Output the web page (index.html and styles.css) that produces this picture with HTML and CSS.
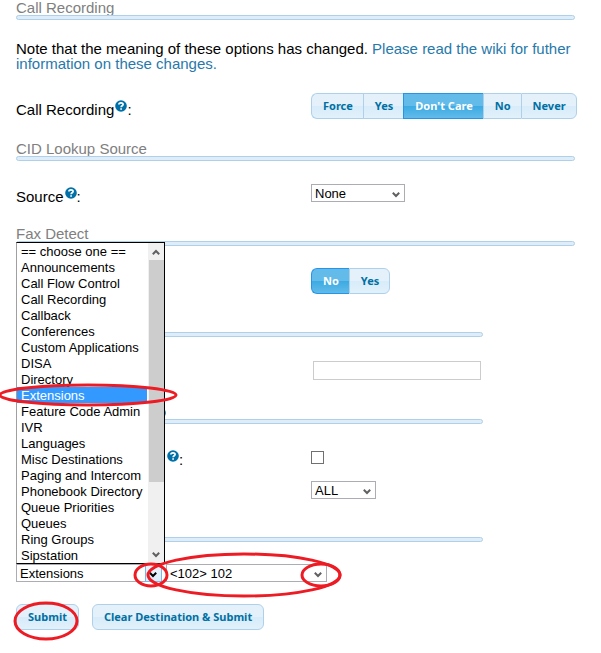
FILE: index.html
```html
<!DOCTYPE html>
<html lang="en">
<head>
<meta charset="utf-8">
<title>Call Recording</title>
<link rel="stylesheet" href="styles.css">
</head>
<body>
<svg class="defs" aria-hidden="true">
  <symbol id="help" viewBox="0 0 12 12">
    <circle cx="6" cy="6" r="5.8" fill="#0071a8"/>
    <path d="M3.9 4.6C3.9 2.4 8.1 2.3 8.1 4.5C8.1 5.8 6.2 5.8 6.1 7.2M6.1 8.2V9.8" fill="none" stroke="#fff" stroke-width="1.7"/>
  </symbol>
  <symbol id="chevron" viewBox="0 0 8 6">
    <path d="M0.8 0.8L4 4L7.2 0.8" fill="none" stroke="currentColor" stroke-width="2"/>
  </symbol>
</svg>
<main class="page">
  <form>
    <section class="section recording">
      <h2 class="title">Call Recording</h2>
      <p class="note">Note that the meaning of these options has changed. <a href="#">Please read the wiki for futher information on these changes.</a></p>
      <div class="row">
        <span class="label" id="rec-label">Call Recording<svg class="help"><use href="#help"/></svg>:</span>
        <div class="buttonset" role="radiogroup" aria-labelledby="rec-label">
          <input type="radio" name="rec" id="rec-force"><label for="rec-force">Force</label>
          <input type="radio" name="rec" id="rec-yes"><label for="rec-yes">Yes</label>
          <input type="radio" name="rec" id="rec-any" checked><label for="rec-any">Don't Care</label>
          <input type="radio" name="rec" id="rec-no"><label for="rec-no">No</label>
          <input type="radio" name="rec" id="rec-never"><label for="rec-never">Never</label>
        </div>
      </div>
    </section>

    <section class="section lookup">
      <h2 class="title">CID Lookup Source</h2>
      <div class="row">
        <label class="label" for="source">Source<svg class="help"><use href="#help"/></svg>:</label>
        <div class="dropdown source">
          <select id="source"><option>None</option></select>
          <svg class="arrow"><use href="#chevron"/></svg>
        </div>
      </div>
    </section>

    <section class="section fax">
      <h2 class="title">Fax Detect</h2>
      <div class="row">
        <span></span>
        <div class="buttonset" role="radiogroup">
          <input type="radio" name="fax" id="fax-no" checked><label for="fax-no">No</label>
          <input type="radio" name="fax" id="fax-yes"><label for="fax-yes">Yes</label>
        </div>
      </div>
    </section>

    <section class="section narrow language">
      <div class="title"></div>
      <div class="row">
        <span></span>
        <input class="textbox" type="text">
      </div>
    </section>

    <section class="section narrow privacy">
      <div class="title"><svg class="help"><use href="#help"/></svg></div>
      <div class="row">
        <label class="label tail" for="enable"><svg class="help"><use href="#help"/></svg>:</label>
        <input class="tick" type="checkbox" id="enable">
      </div>
      <div class="row">
        <span></span>
        <div class="dropdown all">
          <select><option>ALL</option></select>
          <svg class="arrow"><use href="#chevron"/></svg>
        </div>
      </div>
    </section>

    <section class="section narrow destination">
      <div class="title"></div>
      <div class="targets">
        <div class="dropdown open">
          <select><option>Extensions</option></select>
          <span class="opener"><svg class="arrow"><use href="#chevron"/></svg></span>
          <div class="popup">
            <ul class="options" role="listbox">
              <li role="option">== choose one ==</li>
              <li role="option">Announcements</li>
              <li role="option">Call Flow Control</li>
              <li role="option">Call Recording</li>
              <li role="option">Callback</li>
              <li role="option">Conferences</li>
              <li role="option">Custom Applications</li>
              <li role="option">DISA</li>
              <li role="option">Directory</li>
              <li role="option" aria-selected="true">Extensions</li>
              <li role="option">Feature Code Admin</li>
              <li role="option">IVR</li>
              <li role="option">Languages</li>
              <li role="option">Misc Destinations</li>
              <li role="option">Paging and Intercom</li>
              <li role="option">Phonebook Directory</li>
              <li role="option">Queue Priorities</li>
              <li role="option">Queues</li>
              <li role="option">Ring Groups</li>
              <li role="option">Sipstation</li>
            </ul>
            <div class="scrollbar">
              <svg class="step up"><use href="#chevron"/></svg>
              <div class="thumb"></div>
              <svg class="step"><use href="#chevron"/></svg>
            </div>
          </div>
        </div>
        <div class="dropdown extension">
          <select><option>&lt;102&gt; 102</option></select>
          <svg class="arrow"><use href="#chevron"/></svg>
        </div>
      </div>
    </section>

    <div class="actions">
      <button type="submit">Submit</button>
      <button type="button">Clear Destination &amp; Submit</button>
    </div>
  </form>
  <svg class="marks" width="601" height="653" viewBox="0 0 601 653" fill="none" stroke="#ed1c24" stroke-width="3" aria-hidden="true">
    <ellipse cx="88" cy="395" rx="88" ry="10"/>
    <ellipse cx="151" cy="575" rx="16" ry="11"/>
    <ellipse cx="244" cy="575" rx="96" ry="21"/>
    <ellipse cx="321" cy="575" rx="19" ry="11"/>
    <ellipse cx="46" cy="621" rx="31" ry="18"/>
  </svg>
</main>
</body>
</html>
```
FILE: styles.css
```css
*, *::after { box-sizing: border-box; }

body {
  margin: 0;
  background: #fff;
  color: #000;
  font: 15px/15px "Liberation Sans", Arial, sans-serif;
}

.defs { position: absolute; width: 0; height: 0; }

.page {
  position: relative;
  padding: 0 26px 0 16px;
  overflow: hidden;
}

.section { padding-bottom: 22px; }
.narrow { margin-right: 92px; }

.title {
  display: flex;
  flex-direction: column;
  justify-content: flex-end;
  margin: 0;
  height: 20px;
  color: #808080;
  font-size: 15px;
  font-weight: normal;
  line-height: 15px;
}

.title::after {
  content: "";
  flex: none;
  height: 5px;
  border: 1px solid #aed0ea;
  border-radius: 3px;
  background: #deedf7;
}

.note { margin: 21px 0 22px; }
.note a { color: #2779aa; text-decoration: none; }

.row {
  display: grid;
  grid-template-columns: 295px 1fr;
  align-items: start;
}

.label { display: flex; align-items: flex-end; height: 26px; line-height: 18px; }
.help { width: 12px; height: 12px; margin: 0 0 7px 1px; flex: none; }

.lookup .row { margin-top: 23px; }
.lookup { padding-bottom: 20px; }
.lookup .label { height: 22px; }
.fax .row { margin-top: 22px; }
.fax { padding-bottom: 23px; }

.buttonset { display: flex; }
.buttonset input { position: absolute; opacity: 0; pointer-events: none; }

.buttonset label,
.actions button {
  height: 26px;
  padding: 0 10px 0 11px;
  border: 1px solid #aed0ea;
  background: linear-gradient(#e4f1fb 0 50%, #d7ebf9 50%, #e2f1fb);
  color: #0070a3;
  font: bold 11px/24px "Noto Sans", sans-serif;
  white-space: nowrap;
}

.buttonset label { border-right-width: 0; }
.buttonset label:first-of-type { border-radius: 6px 0 0 6px; }
.buttonset label:last-of-type { border-right-width: 1px; border-radius: 0 6px 6px 0; }

.buttonset input:checked + label {
  border-color: #2694e8;
  background: linear-gradient(#62bbe9 0 50%, #3baae3 50%, #62bbe9);
  color: #fff;
}

.dropdown { position: relative; height: 18px; color: #606060; }

.dropdown select {
  display: block;
  width: 100%;
  height: 18px;
  padding: 1px 3px 0;
  border: 1px solid #abadb3;
  border-radius: 0;
  background: #fff;
  color: #000;
  font: 13px/16px "Liberation Sans", Arial, sans-serif;
  appearance: none;
}

.arrow { position: absolute; right: 5px; top: 8px; width: 8px; height: 6px; }

.source { width: 94px; }
.all { width: 65px; }
.extension { width: 161px; }

.textbox {
  width: 168px;
  height: 19px;
  margin: 0 0 0 2px;
  border: 1px solid #ccc;
}

.language .row { margin-top: 24px; }
.language { padding-bottom: 24px; }

.tick {
  width: 13px;
  height: 13px;
  margin: 0;
  border: 1px solid #707070;
  background: #fff;
  appearance: none;
}

.tail { padding-left: 150px; }
.title .help { margin: 0 0 0 138px; }
.privacy .row { margin-top: 27px; }
.privacy .label { height: 18px; }
.privacy .row + .row { margin-top: 12px; }
.privacy { padding-bottom: 23px; }

.targets { display: flex; gap: 4px; margin-top: 22px; }
.open { width: 146px; }

.opener {
  position: absolute;
  top: 0;
  right: 0;
  width: 17px;
  height: 18px;
  border: 1px solid #7eb4ea;
  background: linear-gradient(#ecf4fc, #dcecfc);
  color: #000;
}

.opener .arrow { right: 4px; top: 7px; }

.popup {
  position: absolute;
  left: 0;
  bottom: 18px;
  width: 149px;
  display: flex;
  border: 1px solid #000;
  border-left-color: #a0a0a0;
  background: #fff;
  color: #000;
}

.options {
  flex: 1;
  margin: 0;
  padding: 0 1px 0 0;
  list-style: none;
  font-size: 13px;
  line-height: 18px;
  white-space: nowrap;
}

.options li { height: 16px; padding-left: 4px; }
.options li[aria-selected="true"] { background: #3399ff; color: #fff; }

.scrollbar {
  width: 16px;
  display: flex;
  flex-direction: column;
  align-items: center;
  background: #f0f0f0;
  color: #606060;
}

.step { width: 8px; height: 6px; margin: auto 0 5px; }
.step.up { margin: 6px 0 5px; transform: rotate(180deg); }
.thumb { width: 15px; height: 222px; background: #cdcdcd; }

.actions { display: flex; gap: 13px; padding-bottom: 23px; }
.actions button { padding: 0 11px; border-radius: 6px; }

.marks { position: absolute; left: 0; top: 0; pointer-events: none; }
```
